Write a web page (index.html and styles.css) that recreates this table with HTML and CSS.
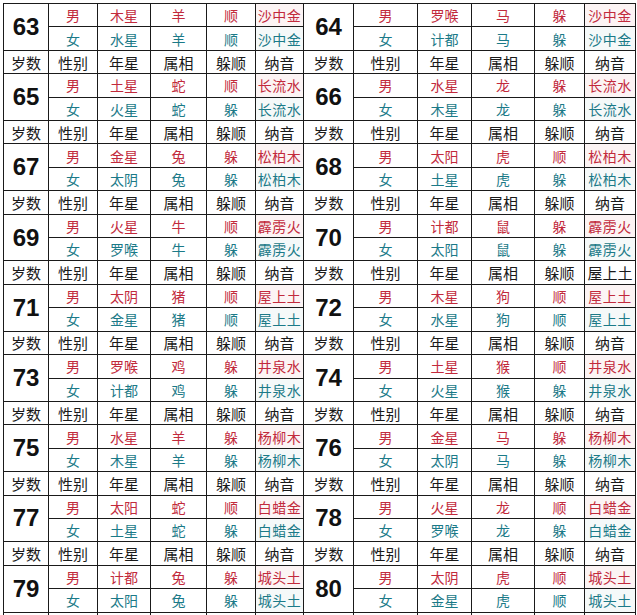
FILE: index.html
```html
<!DOCTYPE html>
<html lang="zh">
<head>
<meta charset="utf-8">
<title>岁数表</title>
<link rel="stylesheet" href="styles.css">
</head>
<body>
<div class="sheet">
  <div class="age">63</div><div class="m">男</div><div class="m">木星</div><div class="m">羊</div><div class="m">顺</div><div class="m ny">沙中金</div>
  <div class="age">64</div><div class="m">男</div><div class="m">罗喉</div><div class="m">马</div><div class="m">躲</div><div class="m ny">沙中金</div>
  <div class="f">女</div><div class="f">水星</div><div class="f">羊</div><div class="f">顺</div><div class="f ny">沙中金</div>
  <div class="f">女</div><div class="f">计都</div><div class="f">马</div><div class="f">躲</div><div class="f ny">沙中金</div>
  <div class="h">岁数</div><div class="h">性别</div><div class="h">年星</div><div class="h">属相</div><div class="h">躲顺</div><div class="h">纳音</div>
  <div class="h">岁数</div><div class="h">性别</div><div class="h">年星</div><div class="h">属相</div><div class="h">躲顺</div><div class="h">纳音</div>

  <div class="age">65</div><div class="m">男</div><div class="m">土星</div><div class="m">蛇</div><div class="m">顺</div><div class="m ny">长流水</div>
  <div class="age">66</div><div class="m">男</div><div class="m">水星</div><div class="m">龙</div><div class="m">躲</div><div class="m ny">长流水</div>
  <div class="f">女</div><div class="f">火星</div><div class="f">蛇</div><div class="f">躲</div><div class="f ny">长流水</div>
  <div class="f">女</div><div class="f">木星</div><div class="f">龙</div><div class="f">躲</div><div class="f ny">长流水</div>
  <div class="h">岁数</div><div class="h">性别</div><div class="h">年星</div><div class="h">属相</div><div class="h">躲顺</div><div class="h">纳音</div>
  <div class="h">岁数</div><div class="h">性别</div><div class="h">年星</div><div class="h">属相</div><div class="h">躲顺</div><div class="h">纳音</div>

  <div class="age">67</div><div class="m">男</div><div class="m">金星</div><div class="m">兔</div><div class="m">躲</div><div class="m ny">松柏木</div>
  <div class="age">68</div><div class="m">男</div><div class="m">太阳</div><div class="m">虎</div><div class="m">顺</div><div class="m ny">松柏木</div>
  <div class="f">女</div><div class="f">太阴</div><div class="f">兔</div><div class="f">躲</div><div class="f ny">松柏木</div>
  <div class="f">女</div><div class="f">土星</div><div class="f">虎</div><div class="f">躲</div><div class="f ny">松柏木</div>
  <div class="h">岁数</div><div class="h">性别</div><div class="h">年星</div><div class="h">属相</div><div class="h">躲顺</div><div class="h">纳音</div>
  <div class="h">岁数</div><div class="h">性别</div><div class="h">年星</div><div class="h">属相</div><div class="h">躲顺</div><div class="h">纳音</div>

  <div class="age">69</div><div class="m">男</div><div class="m">火星</div><div class="m">牛</div><div class="m">顺</div><div class="m ny">霹雳火</div>
  <div class="age">70</div><div class="m">男</div><div class="m">计都</div><div class="m">鼠</div><div class="m">躲</div><div class="m ny">霹雳火</div>
  <div class="f">女</div><div class="f">罗喉</div><div class="f">牛</div><div class="f">躲</div><div class="f ny">霹雳火</div>
  <div class="f">女</div><div class="f">太阳</div><div class="f">鼠</div><div class="f">躲</div><div class="f ny">霹雳火</div>
  <div class="h">岁数</div><div class="h">性别</div><div class="h">年星</div><div class="h">属相</div><div class="h">躲顺</div><div class="h">纳音</div>
  <div class="h">岁数</div><div class="h">性别</div><div class="h">年星</div><div class="h">属相</div><div class="h">躲顺</div><div class="h">屋上土</div>

  <div class="age">71</div><div class="m">男</div><div class="m">太阴</div><div class="m">猪</div><div class="m">顺</div><div class="m ny">屋上土</div>
  <div class="age">72</div><div class="m">男</div><div class="m">木星</div><div class="m">狗</div><div class="m">顺</div><div class="m ny">屋上土</div>
  <div class="f">女</div><div class="f">金星</div><div class="f">猪</div><div class="f">顺</div><div class="f ny">屋上土</div>
  <div class="f">女</div><div class="f">水星</div><div class="f">狗</div><div class="f">顺</div><div class="f ny">屋上土</div>
  <div class="h">岁数</div><div class="h">性别</div><div class="h">年星</div><div class="h">属相</div><div class="h">躲顺</div><div class="h">纳音</div>
  <div class="h">岁数</div><div class="h">性别</div><div class="h">年星</div><div class="h">属相</div><div class="h">躲顺</div><div class="h">纳音</div>

  <div class="age">73</div><div class="m">男</div><div class="m">罗喉</div><div class="m">鸡</div><div class="m">躲</div><div class="m ny">井泉水</div>
  <div class="age">74</div><div class="m">男</div><div class="m">土星</div><div class="m">猴</div><div class="m">顺</div><div class="m ny">井泉水</div>
  <div class="f">女</div><div class="f">计都</div><div class="f">鸡</div><div class="f">躲</div><div class="f ny">井泉水</div>
  <div class="f">女</div><div class="f">火星</div><div class="f">猴</div><div class="f">躲</div><div class="f ny">井泉水</div>
  <div class="h">岁数</div><div class="h">性别</div><div class="h">年星</div><div class="h">属相</div><div class="h">躲顺</div><div class="h">纳音</div>
  <div class="h">岁数</div><div class="h">性别</div><div class="h">年星</div><div class="h">属相</div><div class="h">躲顺</div><div class="h">纳音</div>

  <div class="age">75</div><div class="m">男</div><div class="m">水星</div><div class="m">羊</div><div class="m">躲</div><div class="m ny">杨柳木</div>
  <div class="age">76</div><div class="m">男</div><div class="m">金星</div><div class="m">马</div><div class="m">躲</div><div class="m ny">杨柳木</div>
  <div class="f">女</div><div class="f">木星</div><div class="f">羊</div><div class="f">躲</div><div class="f ny">杨柳木</div>
  <div class="f">女</div><div class="f">太阴</div><div class="f">马</div><div class="f">躲</div><div class="f ny">杨柳木</div>
  <div class="h">岁数</div><div class="h">性别</div><div class="h">年星</div><div class="h">属相</div><div class="h">躲顺</div><div class="h">纳音</div>
  <div class="h">岁数</div><div class="h">性别</div><div class="h">年星</div><div class="h">属相</div><div class="h">躲顺</div><div class="h">纳音</div>

  <div class="age">77</div><div class="m">男</div><div class="m">太阳</div><div class="m">蛇</div><div class="m">顺</div><div class="m ny">白蜡金</div>
  <div class="age">78</div><div class="m">男</div><div class="m">火星</div><div class="m">龙</div><div class="m">顺</div><div class="m ny">白蜡金</div>
  <div class="f">女</div><div class="f">土星</div><div class="f">蛇</div><div class="f">躲</div><div class="f ny">白蜡金</div>
  <div class="f">女</div><div class="f">罗喉</div><div class="f">龙</div><div class="f">躲</div><div class="f ny">白蜡金</div>
  <div class="h">岁数</div><div class="h">性别</div><div class="h">年星</div><div class="h">属相</div><div class="h">躲顺</div><div class="h">纳音</div>
  <div class="h">岁数</div><div class="h">性别</div><div class="h">年星</div><div class="h">属相</div><div class="h">躲顺</div><div class="h">纳音</div>

  <div class="age">79</div><div class="m">男</div><div class="m">计都</div><div class="m">兔</div><div class="m">躲</div><div class="m ny">城头土</div>
  <div class="age">80</div><div class="m">男</div><div class="m">太阴</div><div class="m">虎</div><div class="m">顺</div><div class="m ny">城头土</div>
  <div class="f">女</div><div class="f">太阳</div><div class="f">兔</div><div class="f">躲</div><div class="f ny">城头土</div>
  <div class="f">女</div><div class="f">金星</div><div class="f">虎</div><div class="f">顺</div><div class="f ny">城头土</div>
  <div class="e"></div><div class="e"></div><div class="e"></div><div class="e"></div><div class="e"></div><div class="e"></div>
  <div class="e"></div><div class="e"></div><div class="e"></div><div class="e"></div><div class="e"></div><div class="e"></div>
</div>
</body>
</html>
```
FILE: styles.css
```css
html, body {
  margin: 0;
  padding: 0;
  background: #ffffff;
  overflow: hidden;
}
body {
  padding: 3px 0 0 3px;
  font-family: "Noto Sans CJK SC", "Noto Sans", sans-serif;
}
.sheet {
  display: grid;
  grid-template-columns: 44px 48px 52px 55px 48px 47px 49px 63px 53px 62px 49px 50px;
  grid-template-rows: repeat(27, 22.42px);
  gap: 1px;
  padding: 1px;
  background: #1a1a1a;
  width: max-content;
}
.sheet > div {
  background: #ffffff;
  display: flex;
  align-items: center;
  justify-content: center;
  font-size: 14px;
  line-height: 1;
  white-space: nowrap;
}
.sheet > .age {
  grid-row: span 2;
  font-family: "Liberation Sans", Arial, sans-serif;
  font-weight: bold;
  font-size: 24px;
  color: #111111;
}
.sheet > .m {
  color: #c22a3c;
}
.sheet > .f {
  color: #1b7a88;
}
.sheet > .h {
  color: #1a1a1a;
  font-size: 15px;
}
.sheet > .m.ny {
  background: #fcf4f4;
  letter-spacing: 0.5px;
}
.sheet > .f.ny {
  background: #f5f9f9;
  letter-spacing: 0.5px;
}
```
